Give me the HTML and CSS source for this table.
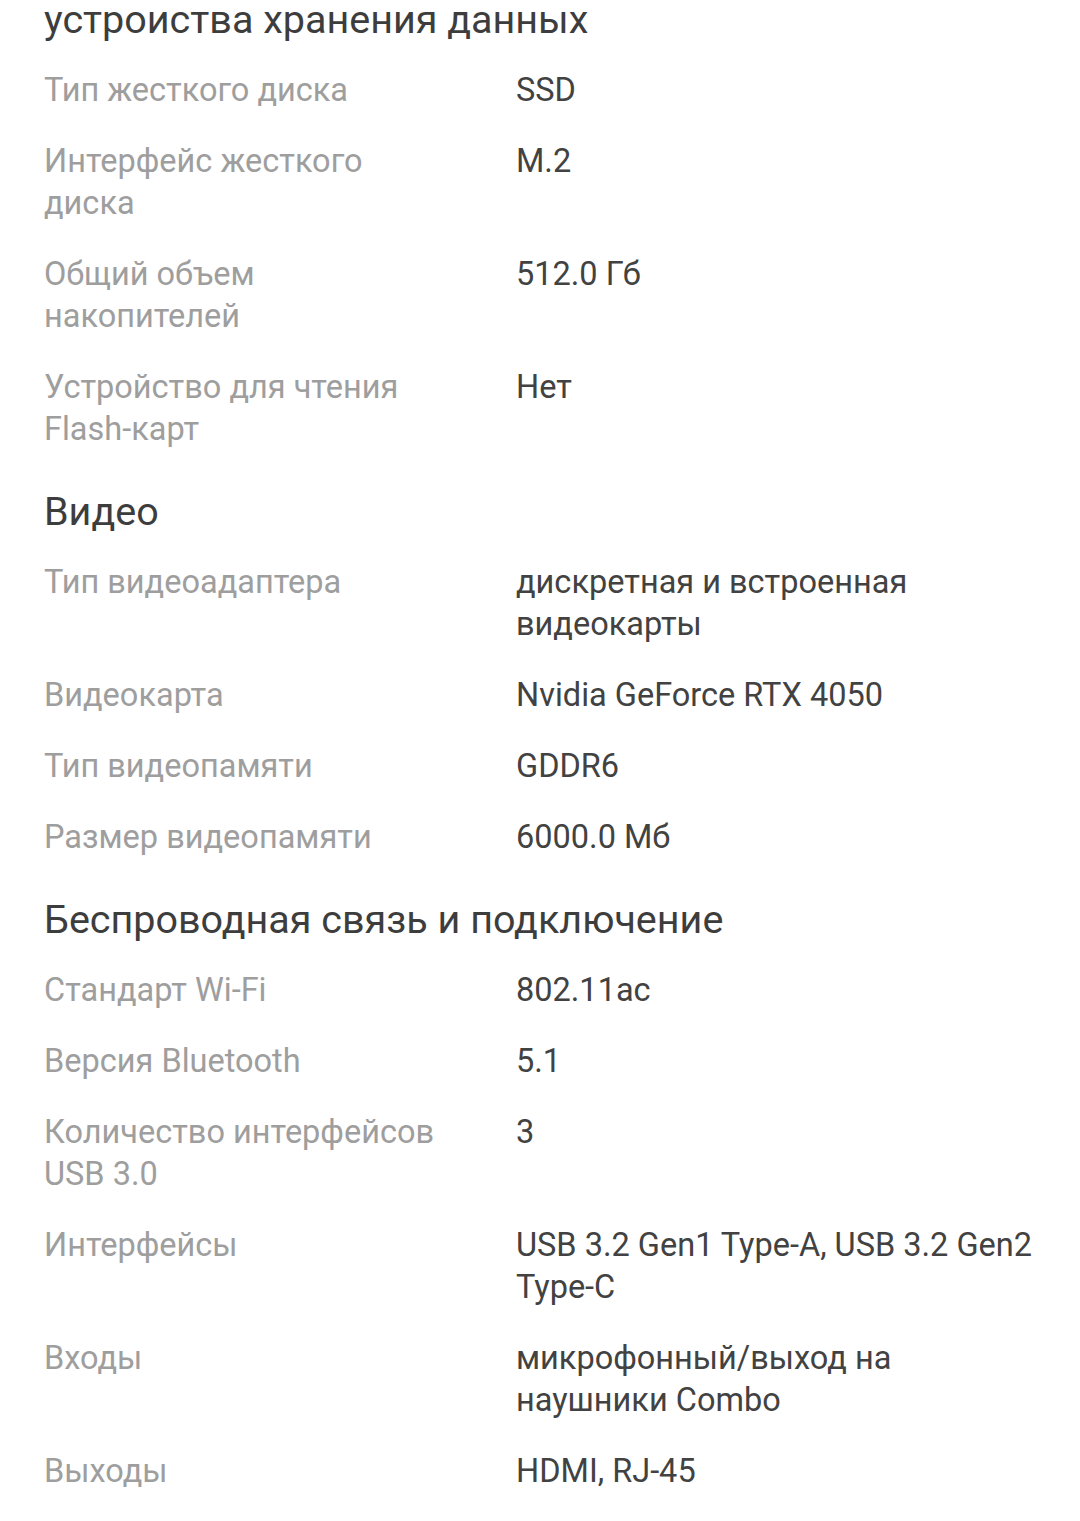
FILE: index.html
```html
<!DOCTYPE html>
<html lang="ru">
<head>
<meta charset="utf-8">
<link rel="stylesheet" href="styles.css">
</head>
<body>
<main class="specs">
  <section class="group">
    <h2 class="group-title">устроиства хранения данных</h2>
    <div class="row"><div class="label">Тип жесткого диска</div><div class="value">SSD</div></div>
    <div class="row"><div class="label">Интерфейс жесткого диска</div><div class="value">M.2</div></div>
    <div class="row"><div class="label">Общий объем накопителей</div><div class="value">512.0 Гб</div></div>
    <div class="row"><div class="label">Устройство для чтения Flash-карт</div><div class="value">Нет</div></div>
  </section>
  <section class="group">
    <h2 class="group-title">Видео</h2>
    <div class="row"><div class="label">Тип видеоадаптера</div><div class="value">дискретная и встроенная видеокарты</div></div>
    <div class="row"><div class="label">Видеокарта</div><div class="value">Nvidia GeForce RTX 4050</div></div>
    <div class="row"><div class="label">Тип видеопамяти</div><div class="value">GDDR6</div></div>
    <div class="row"><div class="label">Размер видеопамяти</div><div class="value">6000.0 Мб</div></div>
  </section>
  <section class="group">
    <h2 class="group-title">Беспроводная связь и подключение</h2>
    <div class="row"><div class="label">Стандарт Wi-Fi</div><div class="value">802.11ac</div></div>
    <div class="row"><div class="label">Версия Bluetooth</div><div class="value">5.1</div></div>
    <div class="row"><div class="label">Количество интерфейсов USB 3.0</div><div class="value">3</div></div>
    <div class="row"><div class="label">Интерфейсы</div><div class="value">USB 3.2 Gen1 Type-A, USB 3.2 Gen2 Type-C</div></div>
    <div class="row"><div class="label">Входы</div><div class="value">микрофонный/выход на наушники Combo</div></div>
    <div class="row"><div class="label">Выходы</div><div class="value">HDMI, RJ-45</div></div>
  </section>
</main>
</body>
</html>
```
FILE: styles.css
```css
html, body {
  margin: 0;
  padding: 0;
  background: #ffffff;
}
body {
  font-family: Roboto, "Noto Sans", sans-serif;
  overflow: hidden;
}
.specs {
  margin-top: -13px;
  padding: 0 40px 0 44px;
}
.group-title {
  margin: 0;
  padding: 9px 0 25px;
  font-size: 39.5px;
  line-height: 48px;
  font-weight: 400;
  color: #3d3d3d;
}
.row {
  display: grid;
  grid-template-columns: 472px 1fr;
  margin-bottom: 29px;
  font-size: 32.5px;
  line-height: 42px;
}
.label {
  color: #9e9e9e;
  padding-right: 66px;
}
.value {
  color: #424242;
}
```
